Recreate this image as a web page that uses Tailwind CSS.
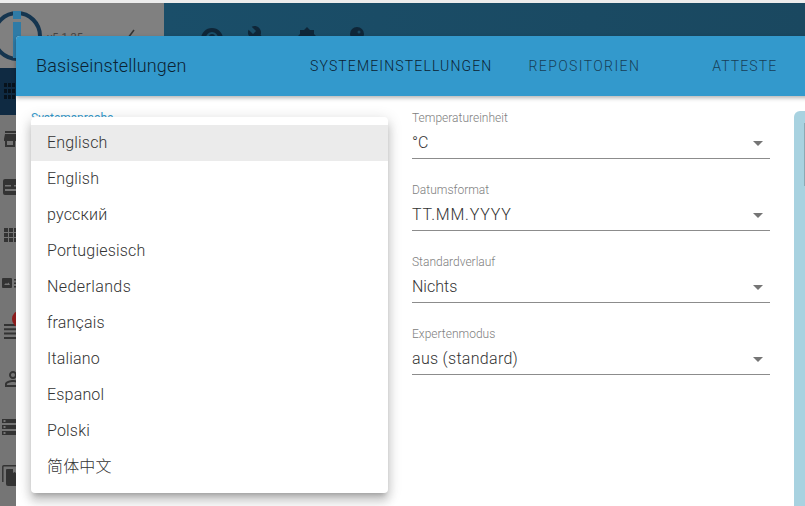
<!DOCTYPE html>
<html lang="de">
<head>
<meta charset="utf-8">
<script src="https://cdn.jsdelivr.net/npm/@tailwindcss/browser@4"></script>
</head>
<body class="w-[805px] h-[506px] overflow-hidden bg-white relative font-['Roboto','Liberation_Sans','Noto_Sans_CJK_SC',sans-serif]">
  <!-- dimmed application behind -->
  <div class="absolute inset-0 flex flex-col bg-[#757575]">
    <div class="h-[3px] shrink-0 bg-[#ececec]"></div>
    <div class="flex h-[65px] shrink-0">
      <div class="w-[164px] relative bg-[#808080]">
        <svg class="absolute left-0 top-[5px]" width="50" height="56" viewBox="0 0 50 56" fill="none"><circle cx="17" cy="28" r="23" stroke="#15354f" stroke-width="4"/><rect x="13" y="3" width="8" height="8" fill="#2f7ba6"/><rect x="13" y="14" width="8" height="36" fill="#2f7ba6"/></svg>
        <span class="absolute left-[47px] top-[28px] text-[11px] leading-[13px] text-[#444]">v5.1.25</span>
        <svg class="absolute left-[126px] top-[26px]" width="10" height="12" viewBox="0 0 10 12" fill="none"><path d="M8 1 L2 9" stroke="#333" stroke-width="1.6"/></svg>
      </div>
      <div class="flex-1 flex items-start bg-linear-to-r from-[#1a4e69] to-[#1a4860] pt-[22px]">
        <svg class="ml-[36px]" width="24" height="24" viewBox="0 0 24 24" fill="#0f2638"><path fill-rule="evenodd" d="M12 3a11 11 0 1 0 0 22 11 11 0 0 0 0-22zm0 4a6 6 0 1 1 0 12 6 6 0 0 1 0-12z"/><circle cx="12" cy="12" r="3"/></svg>
        <svg class="ml-[23px]" width="24" height="24" viewBox="0 0 24 24" fill="#0f2638"><path d="M22.700 19l-9.100-9.100c.9-2.300.4-5-1.500-6.900-2-2-5-2.400-7.400-1.300L9 6 6 9 1.600 4.700C.4 7.100.9 10.100 2.900 12.100c1.900 1.900 4.600 2.400 6.900 1.500l9.100 9.100c.4.400 1 .400 1.400 0l2.300-2.300c.5-.4.5-1.100.1-1.400z"/></svg>
        <svg class="ml-[24px]" width="24" height="24" viewBox="0 0 24 24" fill="#0f2638"><path d="M12 2l3 3h4v4l3 3-3 3v4h-4l-3 3-3-3H5v-4l-3-3 3-3V5h4z"/></svg>
        <svg class="ml-[26px]" width="24" height="24" viewBox="0 0 24 24" fill="#0f2638"><circle cx="12" cy="9" r="7"/><circle cx="14" cy="7" r="1.500" fill="#1a4860"/><rect x="9" y="14" width="6" height="8"/></svg>
      </div>
    </div>
    <div class="w-[16px] h-[47px] shrink-0 bg-[#0f2a42] pl-[4px] pt-[15px]">
      <svg class="block" width="11" height="16" viewBox="0 0 11 16" fill="#07121c"><path d="M0 0h3v4H0zM4 0h3v4H4zM8 0h3v4H8zM0 6h3v4H0zM4 6h3v4H4zM8 6h3v4H8zM0 12h3v4H0zM4 12h3v4H4zM8 12h3v4H8z"/></svg>
    </div>
    <!-- sidebar icons -->
    <div class="flex flex-col w-[16px]">
      <div class="h-[48px] shrink-0 flex items-center pl-[1px]"><svg class="shrink-0" width="24" height="24" viewBox="0 0 24 24" fill="#333"><path d="M20 4H4v2h16V4zm1 10v-2l-1-5H4l-1 5v2h1v6h10v-6h4v6h2v-6h1zm-9 4H6v-4h6v4z"/></svg></div>
      <div class="h-[48px] shrink-0 flex items-center pl-[1px]"><svg class="shrink-0" width="24" height="24" viewBox="0 0 24 24" fill="#333"><path fill-rule="evenodd" d="M4 4h16a2 2 0 0 1 2 2v12a2 2 0 0 1-2 2H4a2 2 0 0 1-2-2V6a2 2 0 0 1 2-2zm0 6v1.500h6V10zm0 4v2h14v-2zm9-4v1.500h7V10z"/></svg></div>
      <div class="h-[48px] shrink-0 flex items-center pl-[1px]"><svg class="shrink-0" width="24" height="24" viewBox="0 0 24 24" fill="#333"><path d="M3 9h4V5H3v4zm0 5h4v-4H3v4zm5 0h4v-4H8v4zm5 0h4v-4h-4v4zM8 9h4V5H8v4zm5-4v4h4V5h-4zm5 9h4v-4h-4v4zM3 19h4v-4H3v4zm5 0h4v-4H8v4zm5 0h4v-4h-4v4zm5 0h4v-4h-4v4zm0-14v4h4V5h-4z"/></svg></div>
      <div class="h-[48px] shrink-0 flex items-center pl-[2px]"><svg class="shrink-0" width="16" height="12" viewBox="0 0 16 12" fill="#333"><path fill-rule="evenodd" d="M1 1h8a1 1 0 0 1 1 1v8a1 1 0 0 1-1 1H1a1 1 0 0 1-1-1V2a1 1 0 0 1 1-1zm1 7h6L6.500 5.500 5 7 4 6z"/><path d="M12 2h4v1.500h-4zM12 5.500h4V7h-4zM12 9h4v1.500h-4z"/></svg></div>
      <div class="h-[48px] shrink-0 relative flex items-center pl-[4px]">
        <svg class="shrink-0" width="12" height="15" viewBox="0 0 12 15" fill="#333"><path d="M0 0h12v2H0zM0 4.300h12v2H0zM0 8.600h12v2H0zM0 13h12v2H0z"/></svg>
        <span class="absolute left-[12px] top-[3px] w-[18px] h-[18px] rounded-full bg-[#8c1c1c]"></span>
      </div>
      <div class="h-[48px] shrink-0 flex items-center pl-[1px]"><svg class="shrink-0" width="24" height="24" viewBox="0 0 24 24" fill="#333"><path d="M12 5.900a2.100 2.100 0 1 1 0 4.200 2.100 2.100 0 0 1 0-4.200m0 9c2.970 0 6.100 1.460 6.100 2.100v1.100H5.900V17c0-.64 3.130-2.100 6.100-2.100M12 4C9.790 4 8 5.790 8 8s1.790 4 4 4 4-1.790 4-4-1.790-4-4-4zm0 9c-2.670 0-8 1.340-8 4v3h16v-3c0-2.660-5.330-4-8-4z"/></svg></div>
      <div class="h-[48px] shrink-0 flex items-center pl-[2px]"><svg class="shrink-0" width="16" height="16" viewBox="0 0 16 16" fill="#333"><path fill-rule="evenodd" d="M0 0h16v4H0zm1.500 1v2h2V1zM0 6h16v4H0zm1.500 1v2h2V7zM0 12h16v4H0zm1.500 1v2h2v-2z"/></svg></div>
      <div class="h-[48px] shrink-0 flex items-center pl-[2px]"><svg class="shrink-0" width="16" height="21" viewBox="0 0 16 21" fill="none"><path d="M.8 17V1.800a1 1 0 0 1 1-1H16" stroke="#333" stroke-width="1.400"/><path d="M5 4h11v17H6a2 2 0 0 1-2-2V5a1 1 0 0 1 1-1z" fill="#333"/><path d="M11 4h3v4l-1.500-1L11 8z" fill="#777"/></svg></div>
    </div>
  </div>

  <!-- dialog -->
  <div class="absolute left-[16px] top-[36px] w-[800px] h-[480px] bg-white rounded-t-[4px] flex flex-col">
    <header class="h-[60px] shrink-0 bg-[#3399cc] rounded-t-[4px] shadow-[0_2px_4px_rgba(0,0,0,0.3)] flex items-center relative z-10">
      <h1 class="ml-[20px] w-[274px] text-[18px] text-[#0b2232] leading-none font-light tracking-[0.17px]">Basiseinstellungen</h1>
      <nav class="flex items-center text-[14px] leading-none font-light">
        <span class="text-[#0b2232] tracking-[1.15px]">SYSTEMEINSTELLUNGEN</span>
        <span class="ml-[36px] text-[#173f58] tracking-[1.4px]">REPOSITORIEN</span>
        <span class="ml-[72px] text-[#173f58] tracking-[1.1px]">ATTESTE</span>
      </nav>
    </header>
    <div class="flex flex-1 pt-[15px]">
      <div class="w-[396px] shrink-0 pl-[15px]">
        <div class="text-[12px] leading-[14px] text-[#3399cc]">Systemsprache</div>
      </div>
      <div class="w-[358px] shrink-0 flex flex-col gap-[24px]">
        <div class="h-[48px] border-b border-[#8c8c8c] flex flex-col">
          <div class="text-[12px] leading-[14px] text-[#808080] font-light">Temperatureinheit</div>
          <div class="mt-[6px] flex items-center justify-between text-[16px] leading-[24px] text-[#333] font-light"><span>°C</span><svg class="mr-[7px]" width="10" height="5" viewBox="0 0 10 5" fill="#757575"><path d="M0 0h10L5 5z"/></svg></div>
        </div>
        <div class="h-[48px] border-b border-[#8c8c8c] flex flex-col">
          <div class="text-[12px] leading-[14px] text-[#808080] font-light">Datumsformat</div>
          <div class="mt-[6px] flex items-center justify-between text-[16px] leading-[24px] text-[#333] font-light"><span class="tracking-[0.8px]">TT.MM.YYYY</span><svg class="mr-[7px]" width="10" height="5" viewBox="0 0 10 5" fill="#757575"><path d="M0 0h10L5 5z"/></svg></div>
        </div>
        <div class="h-[48px] border-b border-[#8c8c8c] flex flex-col">
          <div class="text-[12px] leading-[14px] text-[#808080] font-light">Standardverlauf</div>
          <div class="mt-[6px] flex items-center justify-between text-[16px] leading-[24px] text-[#333] font-light"><span>Nichts</span><svg class="mr-[7px]" width="10" height="5" viewBox="0 0 10 5" fill="#757575"><path d="M0 0h10L5 5z"/></svg></div>
        </div>
        <div class="h-[48px] border-b border-[#8c8c8c] flex flex-col">
          <div class="text-[12px] leading-[14px] text-[#808080] font-light">Expertenmodus</div>
          <div class="mt-[6px] flex items-center justify-between text-[16px] leading-[24px] text-[#333] font-light"><span class="tracking-[0.3px]">aus (standard)</span><svg class="mr-[7px]" width="10" height="5" viewBox="0 0 10 5" fill="#757575"><path d="M0 0h10L5 5z"/></svg></div>
        </div>
      </div>
      <div class="ml-[24px] w-[30px] h-[400px] bg-[#a8d2e0] rounded-tl-[6px] pl-[10px] pt-[12px]"><div class="w-[1px] h-[63px] bg-[#8aa9b4]"></div></div>
    </div>
  </div>

  <!-- dropdown list -->
  <ul class="absolute left-[31px] top-[117px] w-[357px] h-[376px] bg-white rounded-[4px] py-[8px] shadow-[0_5px_5px_-3px_rgba(0,0,0,0.2),0_8px_10px_1px_rgba(0,0,0,0.14),0_3px_14px_2px_rgba(0,0,0,0.12)] text-[16px] text-[#333] font-light leading-[36px] tracking-[0.18px]">
    <li class="h-[36px] px-[16px] bg-[#ebebeb]">Englisch</li>
    <li class="h-[36px] px-[16px]">English</li>
    <li class="h-[36px] px-[16px]">русский</li>
    <li class="h-[36px] px-[16px]">Portugiesisch</li>
    <li class="h-[36px] px-[16px] tracking-[0.4px]">Nederlands</li>
    <li class="h-[36px] px-[16px]">français</li>
    <li class="h-[36px] px-[16px]">Italiano</li>
    <li class="h-[36px] px-[16px]">Espanol</li>
    <li class="h-[36px] px-[16px]">Polski</li>
    <li class="h-[36px] px-[16px]">简体中文</li>
  </ul>
</body>
</html>
